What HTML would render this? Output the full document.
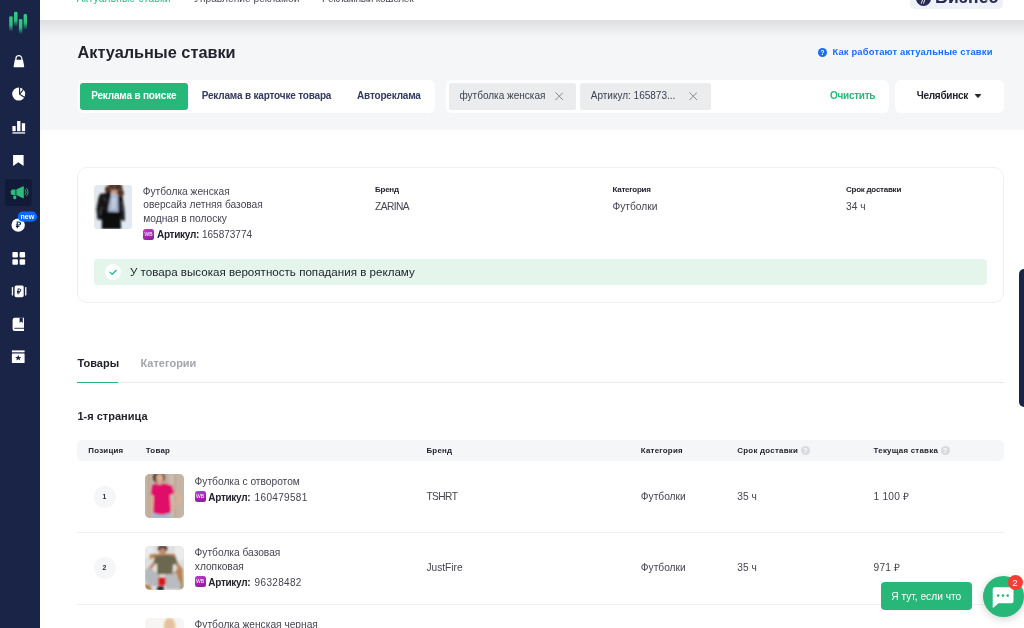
<!DOCTYPE html>
<html lang="ru">
<head>
<meta charset="utf-8">
<title>Актуальные ставки</title>
<style>
*{box-sizing:border-box;margin:0;padding:0}
html,body{width:1024px;height:628px;overflow:hidden;background:#fff}
body{font-family:"Liberation Sans",sans-serif;color:#2b2b36;position:relative;-webkit-font-smoothing:antialiased}
#wrap{position:absolute;left:0;top:0;width:1024px;height:628px;overflow:hidden;will-change:transform}
.t{position:absolute;white-space:nowrap}
.a{position:absolute}
.box{position:absolute;background:#fff;border-radius:6px}
.wb{position:absolute;width:11px;height:11px;border-radius:2.5px;background:linear-gradient(160deg,#c23cc8,#8c179c);color:#fff;font-size:5px;font-weight:400;line-height:11.5px;text-align:center;letter-spacing:-.1px}
.q{position:absolute;width:9.5px;height:9.5px;border-radius:50%;background:#d9dadd;color:#fff;font-size:7px;line-height:9.5px;text-align:center;font-weight:700}
.pos{position:absolute;left:93.5px;width:22px;height:22px;border-radius:50%;background:#f5f6f8;font-size:6.8px;font-weight:700;line-height:22px;text-align:center;color:#2b2b36}
.sep{position:absolute;left:77px;width:926.5px;height:1px;background:#f0f0f3}
.img{position:absolute;border-radius:5px;overflow:hidden}
.img svg{display:block}
</style>
</head>
<body>
<div id="wrap">
<div class="a" style="left:40px;top:0;width:984px;height:20px;background:#fff;overflow:hidden">
<div class="t" style="left:36.8px;top:-7px;font-size:10.2px;line-height:11px;color:#27b779;letter-spacing:0.2px;">Актуальные ставки</div>
<div class="t" style="left:154px;top:-7px;font-size:10.2px;line-height:11px;color:#4a4a58;">Управление рекламой</div>
<div class="t" style="left:282px;top:-7px;font-size:10.2px;line-height:11px;color:#4a4a58;letter-spacing:-0.3px;">Рекламный кошелек</div>
<div class="a" style="left:870px;top:-16px;width:93px;height:24.8px;border-radius:5px;background:#eef1f7"></div>
<div class="a" style="left:875.5px;top:-9.5px;width:15.5px;height:15.5px;border-radius:50%;background:#2a2a52"></div>
<svg class="a" style="left:880px;top:0" width="6" height="4" viewBox="0 0 6 4"><path d="M1.2 3.600l1.700-4.600M3.400 3.600l1.700-4.600" stroke="#fff" stroke-width=".9"/></svg>
<div class="t" style="left:895px;top:-13px;font-size:17.5px;line-height:20px;color:#2a2a52;font-weight:700;letter-spacing:0.3px;">Бизнес</div>
</div>
<div class="a" style="left:40px;top:20px;width:984px;height:110px;background:#f5f6f8"><div class="a" style="left:0;top:0;width:100%;height:17px;background:linear-gradient(#dcdde0,#e9eaec 45%,#f5f6f8)"></div></div>
<div class="a" id="side" style="left:0;top:0;width:40px;height:628px;background:#1a2447">
<svg class="a" style="left:0;top:0" width="40" height="380" viewBox="0 0 40 380">
<defs><linearGradient id="lg" x1="0" y1="0" x2="0" y2="1"><stop offset="0" stop-color="#35c985"/><stop offset=".55" stop-color="#2fbf7d"/><stop offset="1" stop-color="#2fbf7d" stop-opacity="0"/></linearGradient></defs>
<rect x="9.2" y="16.3" width="3.5" height="15.5" rx="1.4" fill="url(#lg)"/>
<rect x="14" y="11.7" width="3.6" height="15.1" rx="1.4" fill="url(#lg)"/>
<rect x="18.9" y="18.9" width="3.5" height="15.5" rx="1.4" fill="url(#lg)"/>
<rect x="23.6" y="14" width="3.4" height="16" rx="1.4" fill="url(#lg)"/>
<!-- bag -->
<path d="M14.800 59.800h8.200l1.200 6.700a.7.7 0 0 1-.7.800h-9.200a.7.7 0 0 1-.7-.8z" fill="#fff"/>
<path d="M15.900 61v-2.300a3 3 0 0 1 6 0v2.300" fill="none" stroke="#fff" stroke-width="1.200"/>
<!-- pie -->
<circle cx="18.7" cy="94.1" r="6.5" fill="#fff"/>
<path d="M19.6 87v7.2l5.2 3.4M19.8 94l4-5.2" stroke="#1a2447" stroke-width="1.2" fill="none"/>
<!-- bars -->
<rect x="12.4" y="126" width="3.3" height="5.2" fill="#fff"/><rect x="17.1" y="121" width="3.3" height="10.2" fill="#fff"/><rect x="21.8" y="123.2" width="3.3" height="8" fill="#fff"/><rect x="12.4" y="132.3" width="12.7" height="1.3" fill="#fff"/>
<!-- bookmark -->
<path d="M13.1 155h10.5v11.1l-5.25-3.9l-5.25 3.9z" fill="#fff"/>
<!-- active megaphone -->
<rect x="4.8" y="178.9" width="26.8" height="27.1" rx="3.5" fill="#111a37"/>
<g fill="#2dbb7b"><path d="M12.6 189.5h2.9v5.500h-2.900a1.800 1.800 0 0 1-1.800-1.800v-1.900a1.800 1.800 0 0 1 1.800-1.800z"/><path d="M16.300 189.500l6.700-3.300a.6.6 0 0 1 .8.500v11.100a.6.6 0 0 1-.8.500l-6.700-3.300z"/><rect x="13.200" y="195.600" width="3.100" height="3.600" rx="1.100"/></g>
<path d="M25.2 189.8a3.2 3.2 0 0 1 0 4.6M26.6 188.3a5.4 5.4 0 0 1 0 7.6" stroke="#2dbb7b" stroke-width=".9" fill="none" stroke-linecap="round"/>
<!-- coin -->
<circle cx="18.2" cy="225.1" r="6.7" fill="#fff"/>
<text x="18.3" y="228.4" font-family="Liberation Sans,sans-serif" font-size="9" font-weight="700" fill="#1a2447" text-anchor="middle">₽</text>
<rect x="17.8" y="211.5" width="19.2" height="10.2" rx="5.1" fill="#0b6bff"/>
<text x="27.4" y="219" font-family="Liberation Sans,sans-serif" font-size="7" font-weight="700" fill="#fff" text-anchor="middle">new</text>
<!-- grid -->
<rect x="12.4" y="252" width="5.5" height="5.5" rx="1" fill="#fff"/><rect x="19.6" y="252" width="5.5" height="5.5" rx="1" fill="#fff"/><rect x="12.4" y="259.2" width="5.5" height="5.5" rx="1" fill="#fff"/><rect x="19.6" y="259.2" width="5.5" height="5.5" rx="1" fill="#fff"/>
<!-- carousel P -->
<rect x="14.6" y="285.4" width="9.1" height="11.8" rx="1.6" fill="#fff"/><rect x="11.8" y="287" width="1.3" height="8.6" rx=".6" fill="#fff"/><rect x="25.1" y="287" width="1.3" height="8.6" rx=".6" fill="#fff"/>
<text x="19.2" y="294.2" font-family="Liberation Sans,sans-serif" font-size="7.5" font-weight="700" fill="#1a2447" text-anchor="middle">₽</text>
<!-- book -->
<path d="M14.8 317.7h9.2v13.3h-9.4a2 2 0 0 1-2-2v-9.1a2.2 2.2 0 0 1 2.2-2.2z" fill="#fff"/>
<path d="M19.6 317.7h3.2v5.2l-1.6-1.3l-1.6 1.3z" fill="#1a2447"/>
<path d="M14.3 328.3h9.7" stroke="#1a2447" stroke-width=".9"/>
<!-- box star -->
<rect x="11.9" y="350.4" width="12.7" height="1.9" fill="#fff"/><rect x="11.9" y="353.4" width="12.7" height="9.6" rx=".6" fill="#fff"/>
<path d="M18.25 355l.95 2h2.1l-1.7 1.4l.65 2.1l-2-1.3l-2 1.3l.65-2.1l-1.7-1.4h2.1z" fill="#1a2447"/>
</svg>
</div>
<div class="t" style="left:77.5px;top:43px;font-size:16.3px;line-height:18px;color:#23232e;font-weight:700;">Актуальные ставки</div>
<div class="a" style="left:818px;top:48px;width:9px;height:9px;border-radius:50%;background:#1a6cff;color:#fff;font-size:6.5px;font-weight:700;line-height:9px;text-align:center">?</div>
<div class="t" style="left:832.4px;top:46px;font-size:9.4px;line-height:11px;color:#1a6cff;font-weight:700;letter-spacing:0.18px;">Как работают актуальные ставки</div>
<div class="box" style="left:78px;top:79.5px;width:357px;height:33px"></div>
<div class="a" style="left:80px;top:82.5px;width:108px;height:27.5px;border-radius:3px;background:#27b779"></div>
<div class="t" style="left:91.25px;top:90px;font-size:10px;line-height:11px;color:#fff;font-weight:700;letter-spacing:-0.18px;">Реклама в поиске</div>
<div class="t" style="left:201.75px;top:90px;font-size:10px;line-height:11px;color:#333b5e;font-weight:700;letter-spacing:-0.18px;">Реклама в карточке товара</div>
<div class="t" style="left:357px;top:90px;font-size:10px;line-height:11px;color:#333b5e;font-weight:700;letter-spacing:-0.18px;">Автореклама</div>
<div class="box" style="left:446px;top:79.5px;width:442.5px;height:33px"></div>
<div class="a" style="left:448.75px;top:82.5px;width:127.5px;height:27px;border-radius:2.5px;background:#ebecee"></div>
<div class="t" style="left:459.5px;top:90px;font-size:10px;line-height:11px;color:#3d4153;">футболка женская</div>
<svg class="a" style="left:554.5px;top:92px" width="8.5" height="8.5" viewBox="0 0 8.5 8.5"><path d="M0.4 0.4L8.1 8.1M8.1 0.4L0.4 8.1" stroke="#85888f" stroke-width="1" fill="none"/></svg>
<div class="a" style="left:579.5px;top:82.5px;width:131px;height:27px;border-radius:2.5px;background:#ebecee"></div>
<div class="t" style="left:590.75px;top:90px;font-size:10px;line-height:11px;color:#3d4153;">Артикул: 165873...</div>
<svg class="a" style="left:688.5px;top:92px" width="8.5" height="8.5" viewBox="0 0 8.5 8.5"><path d="M0.4 0.4L8.1 8.1M8.1 0.4L0.4 8.1" stroke="#85888f" stroke-width="1" fill="none"/></svg>
<div class="t" style="left:830px;top:90px;font-size:10px;line-height:11px;color:#27b779;font-weight:700;letter-spacing:-0.27px;">Очистить</div>
<div class="box" style="left:894.6px;top:79.5px;width:109px;height:33px"></div>
<div class="t" style="left:916.7px;top:90px;font-size:10px;line-height:11px;color:#23232e;font-weight:700;letter-spacing:-0.27px;">Челябинск</div>
<svg class="a" style="left:974px;top:93px" width="8" height="6" viewBox="0 0 8 6"><path d="M1.300 1.500h5.400l-2.700 3.100z" fill="#23232e" stroke="#23232e" stroke-width="1" stroke-linejoin="round"/></svg>
<div class="a" style="left:77px;top:167px;width:927px;height:136px;border:1px solid #efeff2;border-radius:10px"></div>
<div class="img" id="im0" style="left:94px;top:184.5px;width:38px;height:44px;border-radius:4px;background:#e3e9f0"><svg width="38" height="44" viewBox="0 0 38 44"><defs><filter id="b0" x="-10%" y="-10%" width="120%" height="120%"><feGaussianBlur stdDeviation="0.85"/></filter></defs><rect width="38" height="44" fill="#e3e9f0"/><g filter="url(#b0)">
<g fill="#4a2d1f"><circle cx="14.800" cy="4.500" r="3.800"/><circle cx="19" cy="1.800" r="4.500"/><circle cx="24" cy="3" r="4.500"/><circle cx="26.300" cy="8" r="3.600"/><circle cx="25.800" cy="12.500" r="3"/><circle cx="14.300" cy="8.500" r="2.600"/></g>
<g fill="#6e4630"><circle cx="25" cy="5" r="1.700"/><circle cx="16" cy="3" r="1.500"/><circle cx="26.500" cy="11" r="1.400"/></g>
<ellipse cx="20.200" cy="5.600" rx="3" ry="4.100" fill="#c99c84"/>
<rect x="17.200" y="2.500" width="6.500" height="2.200" rx="1" fill="#121216"/>
<path d="M15 9.500h9.500l1 18h-12.500z" fill="#a9b6d0"/>
<path d="M18 12l4 1-1 10-3 1z" fill="#c3cde0"/>
<path d="M6 9l9.500-1.500 1.500 2.500-2.500 12-1 13-10-.5-1.100-10.500 2.100-11z" fill="#131419"/>
<path d="M24 10l4.500 2.500 2 11.500.3 12-3.800-1-2.500-9z" fill="#15161b"/>
<path d="M9 12l4 4.500M7.500 22l-1.500 8M27.500 17l1.500 9" stroke="#4b4f5a" stroke-width="1" fill="none"/>
<path d="M8 26.500l18.500.5.500 17h-19.200z" fill="#0e0e11"/>
</g></svg></div>
<div class="t" style="left:142.7px;top:186px;font-size:10.2px;line-height:11px;color:#444452;">Футболка женская</div>
<div class="t" style="left:143.25px;top:199px;font-size:10.2px;line-height:11px;color:#444452;">оверсайз летняя базовая</div>
<div class="t" style="left:143.25px;top:213px;font-size:10.2px;line-height:11px;color:#444452;">модная в полоску</div>
<div class="wb" style="left:143px;top:229.2px">WB</div>
<div class="t" style="left:157px;top:229px;font-size:10px;line-height:11px;color:#23232e;font-weight:700;letter-spacing:-0.3px;">Артикул:</div>
<div class="t" style="left:202px;top:229px;font-size:10px;line-height:11px;color:#444452;">165873774</div>
<div class="t" style="left:375px;top:185px;font-size:8px;line-height:9px;color:#23232e;font-weight:700;letter-spacing:-0.25px;">Бренд</div>
<div class="t" style="left:375px;top:201px;font-size:10.2px;line-height:11px;color:#444452;letter-spacing:-0.55px;">ZARINA</div>
<div class="t" style="left:612.5px;top:185px;font-size:8px;line-height:9px;color:#23232e;font-weight:700;letter-spacing:-0.25px;">Категория</div>
<div class="t" style="left:612.5px;top:201px;font-size:10.2px;line-height:11px;color:#444452;">Футболки</div>
<div class="t" style="left:846px;top:185px;font-size:8px;line-height:9px;color:#23232e;font-weight:700;letter-spacing:-0.25px;">Срок доставки</div>
<div class="t" style="left:846px;top:201px;font-size:10.2px;line-height:11px;color:#444452;">34 ч</div>
<div class="a" style="left:94.25px;top:258.6px;width:892.7px;height:26.7px;border-radius:4px;background:#e4f6ec"></div>
<div class="a" style="left:104.8px;top:264px;width:16.4px;height:16.4px;border-radius:50%;background:#fff"></div>
<svg class="a" style="left:108px;top:268px" width="10" height="8" viewBox="0 0 10 8"><path d="M1.900 4.100L4.200 6.300L8.300 2.300" stroke="#27b779" stroke-width="1.250" fill="none" stroke-linecap="round" stroke-linejoin="round"/></svg>
<div class="t" style="left:130px;top:266px;font-size:11.6px;line-height:12px;color:#23232e;">У товара высокая вероятность попадания в рекламу</div>
<div class="t" style="left:77.5px;top:357px;font-size:11px;line-height:12px;color:#23232e;font-weight:700;">Товары</div>
<div class="t" style="left:140.5px;top:357px;font-size:11px;line-height:12px;color:#a3a5ae;font-weight:700;">Категории</div>
<div class="a" style="left:77px;top:382px;width:926.5px;height:1px;background:#e9eaed"></div>
<div class="a" style="left:77px;top:381.5px;width:41px;height:1.5px;background:#27b779"></div>
<div class="t" style="left:77.5px;top:410px;font-size:11px;line-height:12px;color:#23232e;font-weight:700;">1-я страница</div>
<div class="a" style="left:77px;top:440px;width:926.5px;height:21px;border-radius:5px;background:#f5f6f8"></div>
<div class="t" style="left:88.25px;top:446px;font-size:7.9px;line-height:9px;color:#23232e;font-weight:700;letter-spacing:0.25px;">Позиция</div>
<div class="t" style="left:145.75px;top:446px;font-size:7.9px;line-height:9px;color:#23232e;font-weight:700;letter-spacing:0.25px;">Товар</div>
<div class="t" style="left:426.4px;top:446px;font-size:7.9px;line-height:9px;color:#23232e;font-weight:700;letter-spacing:0.25px;">Бренд</div>
<div class="t" style="left:640.8px;top:446px;font-size:7.9px;line-height:9px;color:#23232e;font-weight:700;letter-spacing:0.25px;">Категория</div>
<div class="t" style="left:737.3px;top:446px;font-size:7.9px;line-height:9px;color:#23232e;font-weight:700;letter-spacing:0.25px;">Срок доставки</div>
<div class="t" style="left:873.6px;top:446px;font-size:7.9px;line-height:9px;color:#23232e;font-weight:700;letter-spacing:0.25px;">Текущая ставка</div>
<div class="q" style="left:800.7px;top:445.6px">?</div>
<div class="q" style="left:940.5px;top:445.6px">?</div>
<div class="pos" style="top:485.5px">1</div>
<div class="img" id="im1" style="left:145px;top:474.3px;width:39px;height:44px;background:#c2b0a0"><svg width="39" height="44" viewBox="0 0 39 44"><defs><filter id="b1" x="-10%" y="-10%" width="120%" height="120%"><feGaussianBlur stdDeviation="0.85"/></filter></defs><rect width="39" height="44" fill="#c5b4a4"/><g filter="url(#b1)">
<path d="M4 0v44M22 0v44M30 0v44" stroke="#b3a08f" stroke-width="1.200"/>
<rect x="24" y="0" width="5" height="44" fill="#cdbdae"/>
<ellipse cx="14" cy="3.500" rx="6" ry="5.600" fill="#3b2a22"/>
<ellipse cx="14.600" cy="4.200" rx="3.500" ry="4.600" fill="#dcae93"/>
<rect x="12.500" y="7.500" width="4.500" height="4" fill="#d8a78b"/>
<path d="M27.500 18l8 6-7.500 9" stroke="#dcae93" stroke-width="3" fill="none" stroke-linecap="round" stroke-linejoin="round"/>
<path d="M7 21l-.8 21" stroke="#dcae93" stroke-width="2.600" fill="none"/>
<rect x="7" y="37" width="18.600" height="8" fill="#a3bad3"/>
<path d="M11 9.600c2 1.600 5 1.600 7 0l9 1.600 2.300 8-4.300 2 1 16.800c-5 3.500-12 3.500-18 .5l1-16.500-3-1.500 1.200-9z" fill="#e10a6b"/>
</g></svg></div>
<div class="t" style="left:194.6px;top:476px;font-size:10.2px;line-height:11px;color:#444452;">Футболка с отворотом</div>
<div class="wb" style="left:194.5px;top:491px">WB</div>
<div class="t" style="left:208.3px;top:492px;font-size:10px;line-height:11px;color:#23232e;font-weight:700;letter-spacing:-0.3px;">Артикул:</div>
<div class="t" style="left:254.6px;top:492px;font-size:10px;line-height:11px;color:#444452;letter-spacing:0.33px;">160479581</div>
<div class="t" style="left:426.4px;top:491px;font-size:10.2px;line-height:11px;color:#444452;letter-spacing:-0.55px;">TSHRT</div>
<div class="t" style="left:640.8px;top:491px;font-size:10.2px;line-height:11px;color:#444452;">Футболки</div>
<div class="t" style="left:737.3px;top:491px;font-size:10.2px;line-height:11px;color:#444452;">35 ч</div>
<div class="t" style="left:873.6px;top:491px;font-size:10.2px;line-height:11px;color:#444452;letter-spacing:0.2px;">1 100 ₽</div>
<div class="sep" style="top:531.7px"></div>
<div class="pos" style="top:557px">2</div>
<div class="img" id="im2" style="left:145px;top:546px;width:39px;height:44px;background:#dcdcdc"><svg width="39" height="44" viewBox="0 0 39 44"><defs><filter id="b2" x="-10%" y="-10%" width="120%" height="120%"><feGaussianBlur stdDeviation="0.85"/></filter></defs><rect width="39" height="44" fill="#dfdfdf"/><g filter="url(#b2)">
<rect x="0" y="0" width="8" height="12" fill="#ececec"/><rect x="30" y="0" width="9" height="14" fill="#ececec"/>
<rect x="4.500" y="8" width="26" height="5.500" rx="1" fill="#b58248"/>
<rect x="6.500" y="12" width="22" height="18" fill="#e8e2d6"/>
<path d="M31.500 22l6 2 1 19h-5z" fill="#b58248"/><path d="M0 38l5 1 2 5h-7z" fill="#b58248"/>
<ellipse cx="17.600" cy="2.800" rx="4.600" ry="3.200" fill="#2c1f1a"/>
<ellipse cx="17.600" cy="6.200" rx="3.300" ry="4.200" fill="#c08c6c"/>
<path d="M9.500 17l-6 7.500 10 7" stroke="#b98362" stroke-width="3" fill="none" stroke-linecap="round" stroke-linejoin="round"/>
<path d="M31 17l5.500 7-8 4" stroke="#b98362" stroke-width="3" fill="none" stroke-linecap="round" stroke-linejoin="round"/>
<path d="M0 23l6-1 9 8v10h-9l-6-5z" fill="#b5b8bc"/>
<path d="M20 28l10-1 6 11-1 5h-14z" fill="#b9bcc0"/>
<path d="M10 10.300l7-1h7l7 1.800 1.500 6-4.500 1.500-.5 9.500-15.500.3v-10.400l-3.800-1z" fill="#6c6850"/>
<rect x="13.100" y="31.400" width="7.600" height="8" rx="1" fill="#d9191f"/>
<ellipse cx="15.500" cy="42.300" rx="3.600" ry="2.300" fill="#1b1b1f"/>
</g></svg></div>
<div class="t" style="left:194.6px;top:547px;font-size:10.2px;line-height:11px;color:#444452;">Футболка базовая</div>
<div class="t" style="left:194.8px;top:561px;font-size:10.2px;line-height:11px;color:#444452;">хлопковая</div>
<div class="wb" style="left:194.5px;top:576.3px">WB</div>
<div class="t" style="left:208.3px;top:577px;font-size:10px;line-height:11px;color:#23232e;font-weight:700;letter-spacing:-0.3px;">Артикул:</div>
<div class="t" style="left:254.6px;top:577px;font-size:10px;line-height:11px;color:#444452;letter-spacing:0.33px;">96328482</div>
<div class="t" style="left:426.4px;top:562px;font-size:10.2px;line-height:11px;color:#444452;">JustFire</div>
<div class="t" style="left:640.8px;top:562px;font-size:10.2px;line-height:11px;color:#444452;">Футболки</div>
<div class="t" style="left:737.3px;top:562px;font-size:10.2px;line-height:11px;color:#444452;">35 ч</div>
<div class="t" style="left:873.6px;top:562px;font-size:10.2px;line-height:11px;color:#444452;letter-spacing:0.2px;">971 ₽</div>
<div class="sep" style="top:603.5px"></div>
<div class="img" id="im3" style="left:145px;top:617.8px;width:39px;height:44px;background:#f7f5f3"><svg width="39" height="44" viewBox="0 0 39 44"><defs><filter id="b3" x="-10%" y="-10%" width="120%" height="120%"><feGaussianBlur stdDeviation="0.85"/></filter></defs><rect width="39" height="44" fill="#f7f5f3"/><g filter="url(#b3)">
<ellipse cx="24.600" cy="8" rx="5.900" ry="8.300" fill="#e6ca8e"/>
<ellipse cx="24.700" cy="6.500" rx="3.900" ry="5.300" fill="#e6bfa6"/>
</g></svg></div>
<div class="t" style="left:194.6px;top:619px;font-size:10.2px;line-height:11px;color:#444452;">Футболка женская черная</div>
<div class="a" style="left:1019px;top:268.5px;width:10px;height:138px;border-radius:5px 0 0 5px;background:#1a2447"></div>
<div class="a" style="left:880.8px;top:581.7px;width:91px;height:28.7px;border-radius:4px;background:#27b779"></div>
<div class="t" style="left:891.2px;top:591px;font-size:10.2px;line-height:11px;color:#fff;">Я тут, если что</div>
<div class="a" style="left:982.7px;top:575.7px;width:41px;height:41px;border-radius:50%;background:#27b779;box-shadow:0 2px 8px rgba(0,0,0,.18)"></div>
<svg class="a" style="left:992px;top:586px" width="23" height="23" viewBox="0 0 23 23"><path d="M2.7 1.2h16.8a2 2 0 0 1 2 2v12a2 2 0 0 1-2 2H6.5L1.6 21.6a.5.5 0 0 1-.9-.4V3.2a2 2 0 0 1 2-2z" fill="#fff"/><circle cx="6.2" cy="9.6" r="1.3" fill="#2cb67a"/><circle cx="11" cy="9.6" r="1.3" fill="#2cb67a"/><circle cx="15.7" cy="9.6" r="1.3" fill="#2cb67a"/></svg>
<div class="a" style="left:1007.5px;top:575px;width:15px;height:15px;border-radius:50%;background:#f93d34;color:#fff;font-size:9.5px;line-height:15px;text-align:center">2</div>
</div>
</body>
</html>
